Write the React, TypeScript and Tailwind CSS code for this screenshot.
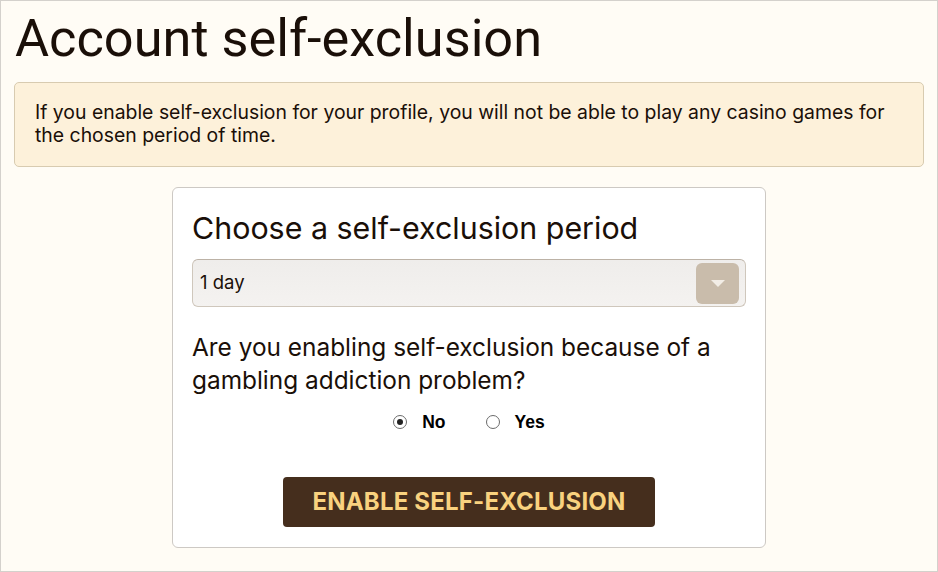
export default function App() {
  return (
    <div className="h-[572px] w-[938px] overflow-hidden border border-[#d4d1cc] bg-[#fffcf5] font-['Inter',sans-serif] text-[#1a0f08]">
      <h1 className="ml-[14px] mt-[8px] font-['Roboto',sans-serif] text-[52.3px] leading-[58px] font-normal">Account self-exclusion</h1>
      <div className="mx-[13px] mt-[15px] rounded-[5px] border border-[#d8cbb0] bg-[#fdf1da] px-[20px] pb-[19px] pt-[18px] text-[19.4px] leading-[23px]">
        If you enable self-exclusion for your profile, you will not be able to play any casino games for the chosen period of time.
      </div>
      <div className="mx-auto mt-[20px] w-[594px] rounded-[6px] border border-[#cdc9c4] bg-white px-[19px] pb-[20px] pt-[22px]">
        <h2 className="text-[30.4px] leading-[36px] font-normal">Choose a self-exclusion period</h2>
        <div className="mt-[13px] flex h-[48px] items-center rounded-[6px] border border-[#cfc7bc] border-t-[#bcb2a6] bg-gradient-to-b from-[#efedeb] to-[#f4f2f0] pl-[7px] pr-[6px]">
          <span className="flex-1 text-[18.5px]">1 day</span>
          <div className="flex h-[41px] w-[43px] items-center justify-center rounded-[6px] bg-[#c9bcab]">
            <svg width="16" height="9" viewBox="0 0 16 9"><path d="M1 1h14L8 8z" fill="#f2ede6" /></svg>
          </div>
        </div>
        <p className="mt-[24px] text-[24.4px] leading-[33px]">Are you enabling self-exclusion because of a gambling addiction problem?</p>
        <div className="mt-[12px] flex items-center justify-center gap-[40px] font-['Liberation_Sans',Arial,sans-serif] text-[17.5px] font-bold text-black">
          <label className="flex items-center gap-[15px]">
            <span className="flex h-[14px] w-[14px] items-center justify-center rounded-full border border-[#6b6b6b] bg-white">
              <span className="h-[6px] w-[6px] rounded-full bg-[#222]" />
            </span>
            No
          </label>
          <label className="flex items-center gap-[15px]">
            <span className="h-[14px] w-[14px] rounded-full border border-[#6b6b6b] bg-white" />
            Yes
          </label>
        </div>
        <div className="mt-[42px] flex justify-center">
          <button className="h-[50px] w-[372px] rounded-[4px] bg-[#452e1d] text-[24px] font-bold tracking-[0.2px] text-[#f9d27f]">
            ENABLE SELF-EXCLUSION
          </button>
        </div>
      </div>
    </div>
  );
}
